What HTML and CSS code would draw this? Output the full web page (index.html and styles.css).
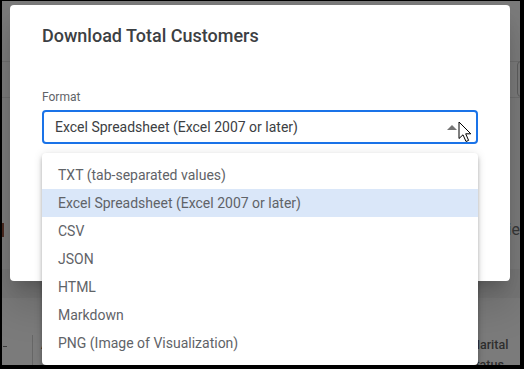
FILE: index.html
```html
<!DOCTYPE html>
<html>
<head>
<meta charset="utf-8">
<link rel="stylesheet" href="styles.css">
</head>
<body>
<div class="screen">
  <div class="page">
    <div class="toolbar"></div>
    <div class="filterbar"><div class="search"></div></div>
    <div class="content">
      <div class="tabs"><span class="mark"></span><span class="tabtext">Movie</span></div>
    </div>
    <div class="band"></div>
    <div class="thead">
      <div class="cell first"><span class="dash"></span></div>
      <div class="cell">Account Number</div>
      <div class="cell sep">Gender Group</div>
      <div class="cell last">Marital status</div>
    </div>
  </div>

  <div class="dialog">
    <h1 class="title">Download Total Customers</h1>
    <div class="label">Format</div>
    <div class="field">
      <div class="select">
        <span class="value">Excel Spreadsheet (Excel 2007 or later)</span>
        <span class="arrow"></span>
      </div>
      <svg class="cursor" width="14" height="22" viewBox="0 0 14 22">
        <path d="M1 1 L1 17.5 L5 13.8 L8 20.5 L10.6 19.4 L7.7 12.8 L12.8 12.8 Z" fill="#fff" stroke="#000" stroke-width="1" stroke-linejoin="miter"/>
      </svg>
      <ul class="menu">
        <li class="item">TXT (tab-separated values)</li>
        <li class="item selected">Excel Spreadsheet (Excel 2007 or later)</li>
        <li class="item">CSV</li>
        <li class="item">JSON</li>
        <li class="item">HTML</li>
        <li class="item">Markdown</li>
        <li class="item">PNG (Image of Visualization)</li>
      </ul>
    </div>
  </div>
</div>
</body>
</html>
```

FILE: styles.css
```css
* { box-sizing: border-box; }
html, body { margin: 0; padding: 0; }
body {
  background: #000;
  width: 524px;
  height: 369px;
  overflow: hidden;
  font-family: Roboto, "Noto Sans", Arial, sans-serif;
}
.screen {
  position: relative;
  margin: 1px 4px 4px 2px;
  width: 518px;
  height: 364px;
  background: #7b7b7b;
  overflow: hidden;
}
.page {
  display: flex;
  flex-direction: column;
  height: 100%;
}
.toolbar {
  height: 61px;
  border-bottom: 1px solid #6f6f6f;
  flex: none;
}
.filterbar {
  height: 36px;
  border-bottom: 1px solid #6f6f6f;
  display: flex;
  justify-content: flex-end;
  flex: none;
}
.search {
  width: 40px;
  margin-right: -37px;
  height: 36px;
  margin-top: -1px;
  border: 1px solid #5e5e5e;
  border-radius: 4px;
}
.content {
  height: 171px;
  flex: none;
  padding-top: 122px;
}
.tabs {
  display: flex;
  justify-content: space-between;
  align-items: center;
  height: 20px;
}
.mark {
  width: 2px;
  height: 14px;
  background: #4b2a20;
}
.tabtext {
  font-size: 16px;
  color: #383838;
  line-height: 20px;
}
.band {
  height: 29px;
  background: #767676;
  flex: none;
}
.thead {
  display: grid;
  grid-template-columns: 31px 258px 168px 1fr;
  padding-top: 37px;
  flex: 1;
}
.cell {
  font-size: 13px;
  font-weight: 500;
  line-height: 20px;
  color: #2e2e2e;
  padding-left: 8px;
}
.cell.first {
  border-right: 1px solid #666;
  padding-left: 1px;
  padding-top: 11px;
}
.dash {
  display: block;
  width: 4px;
  height: 1px;
  background: #3a3a3a;
}
.cell.sep { border-left: 1px solid #6a6a6a; }
.cell.last { padding-left: 10px; font-size: 12.5px; }

.dialog {
  position: absolute;
  left: 8px;
  top: 4px;
  width: 500px;
  height: 276px;
  background: #fff;
  border-radius: 4px;
  padding: 19px 32px 0;
  box-shadow: 0 11px 15px -7px rgba(0,0,0,.2), 0 24px 38px 3px rgba(0,0,0,.14);
}
.title {
  margin: 0;
  font-size: 18px;
  line-height: 24px;
  font-weight: 500;
  color: #3c4043;
}
.label {
  margin-top: 41px;
  font-size: 12px;
  line-height: 16px;
  color: #5f6368;
  margin-bottom: 5px;
}
.field { position: relative; }
.select {
  height: 34px;
  border: 2px solid #1a73e8;
  border-radius: 4px;
  display: flex;
  align-items: center;
  justify-content: space-between;
  padding: 0 19px 0 11px;
}
.value {
  font-size: 14px;
  color: #3c4043;
}
.arrow {
  width: 0;
  height: 0;
  border-left: 5px solid transparent;
  border-right: 5px solid transparent;
  border-bottom: 5px solid #757575;
}
.cursor {
  position: absolute;
  left: 416px;
  top: 11px;
  z-index: 3;
}
.menu {
  position: absolute;
  top: calc(100% + 9px);
  left: 0;
  right: 0;
  margin: 0;
  padding: 8px 0;
  list-style: none;
  background: #fff;
  border-radius: 4px;
  z-index: 2;
  box-shadow: 0 2px 4px -1px rgba(0,0,0,.2), 0 4px 5px 0 rgba(0,0,0,.14), 0 1px 10px 0 rgba(0,0,0,.12);
}
.item {
  height: 28px;
  line-height: 28px;
  padding: 0 16px;
  font-size: 14px;
  color: #5f6368;
  white-space: nowrap;
}
.item.selected { background: #dae7f9; }
```
